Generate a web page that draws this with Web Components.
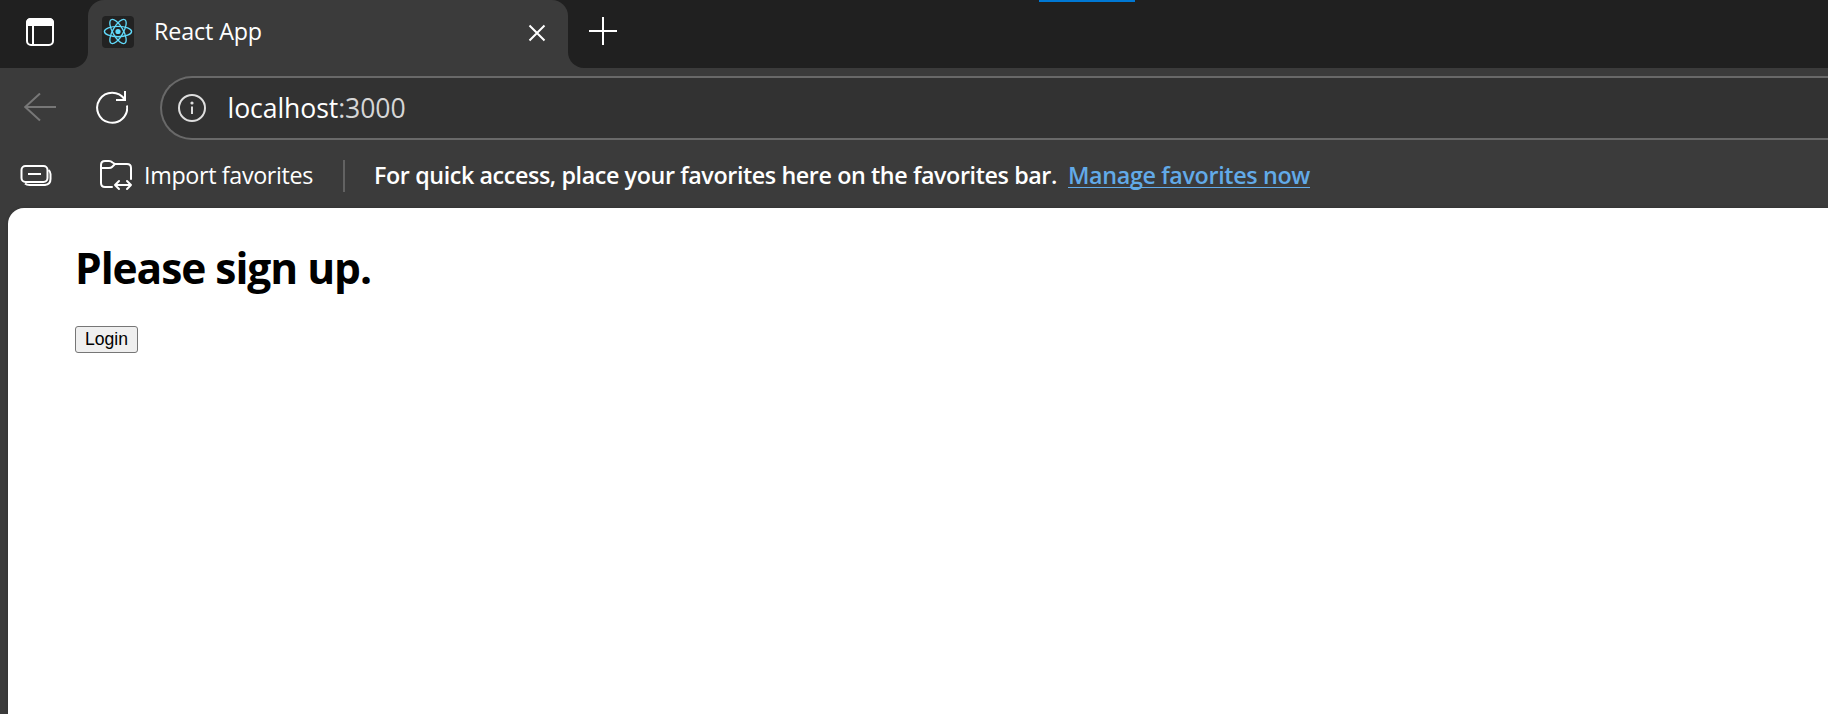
<!DOCTYPE html>
<html lang="en"><head><meta charset="utf-8"><title>React App</title>
<style>html,body{margin:0;height:100%;overflow:hidden;background:#3b3b3b}body{font-family:"Open Sans","Noto Sans",sans-serif}</style></head>
<body><browser-window></browser-window>
<script>
const define = (name, html, setup) => {
  const t = document.createElement('template');
  t.innerHTML = html;
  customElements.define(name, class extends HTMLElement {
    constructor() { super(); this.attachShadow({mode: 'open'}).append(t.content.cloneNode(true)); }
    connectedCallback() { if (setup) setup(this); }
  });
};

// A single-line label whose tracking is set so that it fills the given width.
define('fit-text', `<style>:host{display:block;flex:none;white-space:pre}span{display:inline-block}</style><span><slot></slot></span>`, el => {
  const s = el.shadowRoot.querySelector('span');
  s.style.letterSpacing = '0';
  const d = (+el.getAttribute('width') - s.getBoundingClientRect().width) / el.textContent.length;
  s.style.letterSpacing = d.toFixed(4) + 'px';
});

define('tab-strip', `<style>
:host{display:flex;flex:none;height:68px;background:#202020;color:#fff;position:relative}
.actions{width:88px;display:flex;align-items:flex-start;background:linear-gradient(#3b3b3b,#3b3b3b) right bottom/30px 30px no-repeat}
.actions>div{flex:1;height:68px;background:#202020;border-bottom-right-radius:16px}
.actions svg{display:block;margin:18px 0 0 26px}
.mid{width:480px;height:68px;box-sizing:border-box;background:#3b3b3b;border-radius:16px 16px 0 0;display:flex;padding-left:14px}
.wrap{background:#202020}
.mid .fav{margin-top:16px;flex:none}
fit-text{font-size:23.3px;line-height:32px;margin:15px 0 0 20px}
.close{margin:23px 21px 0 auto}
.rest{flex:1;background:linear-gradient(#3b3b3b,#3b3b3b) left bottom/30px 30px no-repeat}
.rest>div{height:68px;background:#202020;border-bottom-left-radius:16px}
.rest svg{display:block;padding:17px 0 0 21px}
.mark{position:absolute;left:1039px;top:0;width:96px;height:2px;background:#0078d4}
</style>
<div class="actions"><div><svg width="28" height="28"><rect x="1" y="1" width="26" height="26" rx="4" fill="none" stroke="#fff" stroke-width="2"/><path d="M0 8V5Q0 0 5 0H23Q28 0 28 5V8Z" fill="#fff"/><path d="M7 7V27" stroke="#fff" stroke-width="2"/></svg></div></div>
<div class="wrap"><div class="mid"><svg class="fav" width="32" height="32"><rect width="32" height="32" rx="4" fill="#222"/><g fill="none" stroke="#61dafb" stroke-width="1.35"><ellipse cx="16" cy="15.5" rx="13.6" ry="5.2"/><ellipse cx="16" cy="15.5" rx="13.6" ry="5.2" transform="rotate(60 16 15.5)"/><ellipse cx="16" cy="15.5" rx="13.6" ry="5.2" transform="rotate(120 16 15.5)"/></g><circle cx="16" cy="15.5" r="2.6" fill="#61dafb"/></svg><fit-text width="108">React App</fit-text>
<svg class="close" width="20" height="20"><path d="M2.5 2.5L17.5 17.5M17.5 2.5L2.5 17.5" stroke="#fff" stroke-width="2"/></svg></div></div>
<div class="rest"><div><svg width="28" height="28"><path d="M0 14H28M14 0V28" stroke="#fff" stroke-width="2"/></svg></div></div><div class="mark"></div>`);

define('address-bar', `<style>
:host{display:flex;flex:none;height:80px;padding-top:8px;box-sizing:border-box;color:#fff}
.back{margin:17px 0 0 24px}.reload{margin:15px 0 0 40px}
.field{flex:1;margin-left:32px;height:64px;box-sizing:border-box;border:2px solid #696969;border-right:0;border-radius:32px 0 0 32px;background:#323232;display:flex}
.info{margin:16px 0 0 16px}
fit-text{font-size:26.6px;line-height:40px;margin:10px 0 0 21.5px}
.port{color:#d6d6d6}
</style>
<svg class="back" width="32" height="30"><path d="M32 14H1M16 0.5L1.2 14L16 27.5" fill="none" stroke="#777" stroke-width="2"/></svg>
<svg class="reload" width="32" height="34"><path d="M31 14.5A15 15 0 1 1 28.5 8.2M29 0V9H20" fill="none" stroke="#fff" stroke-width="2"/></svg>
<div class="field"><svg class="info" width="28" height="28"><circle cx="14" cy="14" r="13" fill="none" stroke="#dedede" stroke-width="2"/><circle cx="14" cy="9" r="1.6" fill="#dedede"/><path d="M14 12.5V20" stroke="#dedede" stroke-width="2"/></svg><fit-text width="178">localhost<span class="port">:3000</span></fit-text></div>`);

define('favorites-bar', `<style>
:host{display:flex;flex:none;height:60px;color:#fff}
.tabs{margin:17px 0 0 19px}.folder{margin:12px 0 0 48px}
fit-text{font-size:23.3px;line-height:32px;margin-top:11px}
.imp{margin-left:11px}.sep{width:2px;height:32px;background:#626262;margin:12px 0 0 30px}
.hint{font-weight:600;margin-left:29px}
.link{font-weight:600;color:#62aae8;margin-left:11px;line-height:32px;border-bottom:1px solid #62aae8;height:28px}
</style>
<svg class="tabs" width="33" height="24"><g fill="none" stroke="#fff" stroke-width="2"><rect x="2.5" y="1" width="26" height="16" rx="4"/><path d="M6 18.5Q7.5 20 10.5 20H26Q31.5 19.5 31.5 14V9Q31.5 6.5 29.5 5"/><path d="M9 9H22"/></g></svg>
<svg class="folder" width="33" height="34"><g fill="none" stroke="#fff" stroke-width="2" stroke-linecap="round" stroke-linejoin="round"><path d="M12 27H5Q1 27 1 23V5Q1 1 5 1H9Q11 1 12.5 2.5L15 4H27Q31 4 31 8V19"/><path d="M1 8H9Q11 8 12 7L15 4"/><path d="M15 25H31M19 21L15 25L19 29M27 21L31 25L27 29"/></g></svg>
<fit-text class="imp" width="169">Import favorites</fit-text><div class="sep"></div><fit-text class="hint" width="683">For quick access, place your favorites here on the favorites bar.</fit-text><fit-text class="link" width="242">Manage favorites now</fit-text>`);

define('sign-up-page', `<style>
:host{display:block;flex:1;margin-left:8px;background:#fff;border-top-left-radius:16px;color:#000;padding:31px 0 0 67px;box-shadow:0 0 3px #2828288c}
fit-text{font-weight:700;font-size:42.5px;line-height:58px}
h1{margin:0;font:inherit}
button{display:block;box-sizing:border-box;width:63px;height:27px;margin:29px 0 0;padding:0 0 1px;border:1px solid #767676;border-radius:3px;background:#efefef;color:#000;font:17.6px/23px "Liberation Sans",Arial,sans-serif}
</style><h1><fit-text width="296">Please sign up.</fit-text></h1><button>Login</button>`);

define('browser-window', `<style>:host{display:flex;flex-direction:column;height:100vh;overflow:hidden;background:#3b3b3b}</style>
<tab-strip></tab-strip><address-bar></address-bar><favorites-bar></favorites-bar><sign-up-page></sign-up-page>`);
</script></body></html>
